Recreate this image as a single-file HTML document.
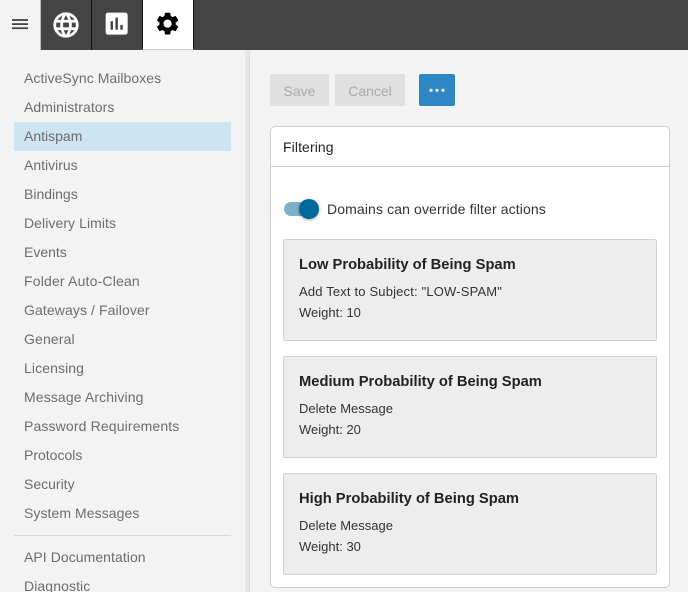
<!DOCTYPE html>
<html>
<head>
<meta charset="utf-8">
<style>
*{box-sizing:border-box}
html,body{margin:0;padding:0;width:688px;height:592px;overflow:hidden}
body{position:relative;background:#f3f3f3;font-family:"Liberation Sans",sans-serif;color:#222}
#w{position:absolute;left:0;top:0;width:688px;height:592px;overflow:hidden}
.abs{position:absolute}
.top{left:0;top:0;width:688px;height:50px;background:#444}
.tab{position:absolute;top:0;height:50px}
.nav{position:absolute;left:14px;width:217px;height:29px;line-height:29px;padding-left:10px;font-size:14px;color:#6d6d6d;white-space:nowrap}
.box{position:absolute;left:283px;width:374px;height:102px;background:#ededed;border:1px solid #d2d2d2;border-radius:2px}
.box b{position:absolute;left:15px;top:17px;font-size:14.72px;line-height:17px;color:#222;white-space:nowrap}
.box span{position:absolute;left:15px;font-size:13px;line-height:15px;color:#333;white-space:nowrap}
</style>
</head>
<body>
<div id="w">
<div class="abs top"></div>
<div class="tab" style="left:0;width:41px;background:#f3f3f3;border-right:1px solid #bbb"></div>
<svg class="abs" style="left:0;top:0" width="41" height="50"><rect x="12" y="19.1" width="16" height="1.8" fill="#444"/><rect x="12" y="23.2" width="16" height="1.8" fill="#444"/><rect x="12" y="27.3" width="16" height="1.8" fill="#444"/></svg>
<div class="tab" style="left:91px;width:1px;background:#111"></div>
<svg class="abs" style="left:50.5px;top:9.5px" width="30" height="30" viewBox="0 0 24 24"><path fill="#fff" stroke="#fff" stroke-width=".25" d="M11.99 2C6.47 2 2 6.48 2 12s4.47 10 9.99 10C17.52 22 22 17.52 22 12S17.52 2 11.99 2zm6.93 6h-2.95c-.32-1.25-.78-2.45-1.38-3.56 1.84.63 3.37 1.91 4.33 3.56zM12 4.04c.83 1.2 1.48 2.53 1.91 3.96h-3.82c.43-1.43 1.08-2.76 1.91-3.96zM4.26 14C4.1 13.36 4 12.69 4 12s.1-1.36.26-2h3.38c-.08.66-.14 1.32-.14 2s.06 1.34.14 2H4.26zm.82 2h2.95c.32 1.25.78 2.45 1.38 3.56-1.84-.63-3.37-1.9-4.33-3.56zm2.95-8H5.08c.96-1.66 2.49-2.93 4.33-3.56C8.81 5.55 8.35 6.75 8.03 8zM12 19.96c-.83-1.2-1.48-2.53-1.91-3.96h3.82c-.43 1.43-1.08 2.76-1.91 3.96zM14.34 14H9.66c-.09-.66-.16-1.32-.16-2s.07-1.35.16-2h4.68c.09.65.16 1.32.16 2s-.07 1.34-.16 2zm.25 5.56c.6-1.11 1.06-2.31 1.38-3.56h2.95c-.96 1.65-2.49 2.93-4.33 3.56zM16.36 14c.08-.66.14-1.32.14-2s-.06-1.34-.14-2h3.38c.16.64.26 1.31.26 2s-.1 1.36-.26 2h-3.38z"/></svg>
<svg class="abs" style="left:102.3px;top:9.3px" width="29.33" height="29.33" viewBox="0 0 24 24"><path fill="#fff" d="M19 3H5c-1.1 0-2 .9-2 2v14c0 1.1.9 2 2 2h14c1.1 0 2-.9 2-2V5c0-1.1-.9-2-2-2zM9 17H7v-7h2v7zm4 0h-2V7h2v10zm4 0h-2v-4h2v4z"/></svg>
<div class="tab" style="left:142px;width:52px;background:#fff;border-left:1px solid #111;border-right:1px solid #111;border-bottom:1px solid #ccc"></div>
<svg class="abs" style="left:154.4px;top:10.4px" width="27.2" height="27.2" viewBox="0 0 24 24"><path fill="#000" d="M19.14 12.94c.04-.3.06-.61.06-.94 0-.32-.02-.64-.07-.94l2.03-1.58c.18-.14.23-.41.12-.61l-1.92-3.32c-.12-.22-.37-.29-.59-.22l-2.39.96c-.5-.38-1.03-.7-1.62-.94l-.36-2.54c-.04-.24-.24-.41-.48-.41h-3.84c-.24 0-.43.17-.47.41l-.36 2.54c-.59.24-1.13.57-1.62.94l-2.39-.96c-.22-.08-.47 0-.59.22L2.74 8.87c-.12.21-.08.47.12.61l2.03 1.58c-.05.3-.09.63-.09.94s.02.64.07.94l-2.03 1.58c-.18.14-.23.41-.12.61l1.92 3.32c.12.22.37.29.59.22l2.39-.96c.5.38 1.03.7 1.62.94l.36 2.54c.05.24.24.41.48.41h3.84c.24 0 .44-.17.47-.41l.36-2.54c.59-.24 1.13-.56 1.62-.94l2.39.96c.22.08.47 0 .59-.22l1.92-3.32c.12-.22.07-.47-.12-.61l-2.01-1.58zM12 15.6c-1.98 0-3.6-1.62-3.6-3.6s1.62-3.6 3.6-3.6 3.6 1.62 3.6 3.6-1.62 3.6-3.6 3.6z"/></svg>

<div class="abs" style="left:245px;top:50px;width:5px;height:542px;background:#e6e6e6;border-right:1px solid #dcdcdc"></div>

<div class="nav" style="top:64px;letter-spacing:.05px">ActiveSync Mailboxes</div>
<div class="nav" style="top:93px;letter-spacing:.07px">Administrators</div>
<div class="nav" style="top:122px;background:#cde5f3">Antispam</div>
<div class="nav" style="top:151px">Antivirus</div>
<div class="nav" style="top:180px">Bindings</div>
<div class="nav" style="top:209px;letter-spacing:.07px">Delivery Limits</div>
<div class="nav" style="top:238px">Events</div>
<div class="nav" style="top:267px;letter-spacing:.18px">Folder Auto-Clean</div>
<div class="nav" style="top:296px;letter-spacing:.1px">Gateways / Failover</div>
<div class="nav" style="top:325px;letter-spacing:.14px">General</div>
<div class="nav" style="top:354px;letter-spacing:.1px">Licensing</div>
<div class="nav" style="top:383px;letter-spacing:.12px">Message Archiving</div>
<div class="nav" style="top:412px;letter-spacing:.14px">Password Requirements</div>
<div class="nav" style="top:441px">Protocols</div>
<div class="nav" style="top:470px">Security</div>
<div class="nav" style="top:499px;letter-spacing:.07px">System Messages</div>
<div class="abs" style="left:14px;top:535px;width:217px;height:1px;background:#d8d8d8"></div>
<div class="nav" style="top:543px;letter-spacing:.06px">API Documentation</div>
<div class="nav" style="top:572px;letter-spacing:.1px">Diagnostic</div>

<div class="abs" style="left:270px;top:74px;width:59px;height:32px;background:#e0e0e0;border-radius:2px;color:#aaa;font-size:14px;line-height:34px;text-align:center">Save</div>
<div class="abs" style="left:335px;top:74px;width:70px;height:32px;background:#e0e0e0;border-radius:2px;color:#aaa;font-size:14px;line-height:34px;text-align:center">Cancel</div>
<div class="abs" style="left:419px;top:74px;width:36px;height:32px;background:#2f86c4;border-radius:2px"></div>
<svg class="abs" style="left:419px;top:74px" width="36" height="32"><circle cx="12" cy="16.3" r="1.6" fill="#fff"/><circle cx="18" cy="16.3" r="1.6" fill="#fff"/><circle cx="24" cy="16.3" r="1.6" fill="#fff"/></svg>

<div class="abs" style="left:270px;top:126px;width:400px;height:462px;background:#fff;border:1px solid #cfcfcf;border-radius:5px"></div>
<div class="abs" style="left:271px;top:166px;width:398px;height:1px;background:#d0d0d0"></div>
<div class="abs" style="left:283px;top:138px;font-size:14px;line-height:18px;color:#222;letter-spacing:.1px">Filtering</div>

<div class="abs" style="left:284px;top:202px;width:34px;height:14px;border-radius:7px;background:#7fb0c9"></div>
<div class="abs" style="left:299px;top:199px;width:20px;height:20px;border-radius:50%;background:#00689b;box-shadow:0 1px 3px rgba(0,0,0,.35)"></div>
<div class="abs" style="left:327px;top:200px;font-size:14px;line-height:18px;color:#333;white-space:nowrap;letter-spacing:.12px">Domains can override filter actions</div>

<div class="box" style="top:239px"><b>Low Probability of Being Spam</b><span style="top:44px;letter-spacing:.17px">Add Text to Subject: "LOW-SPAM"</span><span style="top:65px">Weight: 10</span></div>
<div class="box" style="top:356px"><b>Medium Probability of Being Spam</b><span style="top:44px">Delete Message</span><span style="top:65px">Weight: 20</span></div>
<div class="box" style="top:473px"><b>High Probability of Being Spam</b><span style="top:44px">Delete Message</span><span style="top:65px">Weight: 30</span></div>
</div>
</body>
</html>
